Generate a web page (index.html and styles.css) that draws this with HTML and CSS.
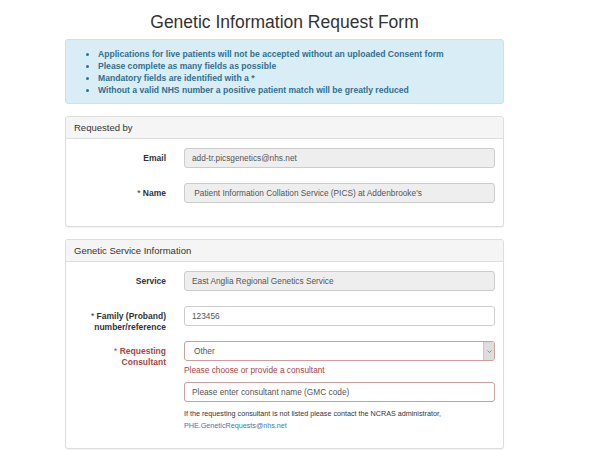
FILE: index.html
```html
<!DOCTYPE html>
<html lang="en">
<head>
<meta charset="utf-8">
<title>Genetic Information Request Form</title>
<link rel="stylesheet" href="styles.css">
</head>
<body>
<div class="container">
  <h1 class="title">Genetic Information Request Form</h1>

  <div class="alert">
    <ul>
      <li>Applications for live patients will not be accepted without an uploaded Consent form</li>
      <li>Please complete as many fields as possible</li>
      <li>Mandatory fields are identified with a *</li>
      <li>Without a valid NHS number a positive patient match will be greatly reduced</li>
    </ul>
  </div>

  <div class="panel">
    <div class="panel-heading">Requested by</div>
    <div class="panel-body">
      <div class="form-group">
        <label class="control-label">Email</label>
        <input class="form-control" type="text" readonly value="add-tr.picsgenetics@nhs.net">
      </div>
      <div class="form-group">
        <label class="control-label"><span class="req">*</span> Name</label>
        <input class="form-control" type="text" readonly value=" Patient Information Collation Service (PICS) at Addenbrooke's">
      </div>
    </div>
  </div>

  <div class="panel">
    <div class="panel-heading">Genetic Service Information</div>
    <div class="panel-body">
      <div class="form-group">
        <label class="control-label">Service</label>
        <input class="form-control" type="text" readonly value="East Anglia Regional Genetics Service">
      </div>
      <div class="form-group">
        <label class="control-label"><span class="req">*</span> Family (Proband) number/reference</label>
        <input class="form-control editable" type="text" value="123456">
      </div>
      <div class="form-group has-error last">
        <label class="control-label"><span class="req">*</span> Requesting Consultant</label>
        <div class="field">
          <div class="select">
            <span class="select-value">Other</span>
            <span class="select-arrow">
              <svg width="5" height="3" viewBox="0 0 5 3"><path d="M0.5 0.5 L2.5 2.5 L4.5 0.5" fill="none" stroke="#777" stroke-width="0.8"/></svg>
            </span>
          </div>
          <div class="error-text">Please choose or provide a consultant</div>
          <input class="form-control editable error-input" type="text" value="Please enter consultant name (GMC code)">
          <p class="help">If the requesting consultant is not listed please contact the NCRAS administrator,<br><a href="#">PHE.GeneticRequests@nhs.net</a></p>
        </div>
      </div>
    </div>
  </div>
</div>
</body>
</html>
```

FILE: styles.css
```css
html, body {
  margin: 0;
  padding: 0;
  background: #fff;
}

body {
  font-family: "Liberation Sans", Arial, sans-serif;
  color: #333;
}

.container {
  width: 439px;
  margin-left: 65px;
}

.title {
  margin: 12px 0 7px;
  font-size: 17.5px;
  line-height: 20px;
  font-weight: normal;
  text-align: center;
  color: #333;
}

.alert {
  box-sizing: border-box;
  height: 65px;
  background: #d9edf7;
  border: 1px solid #bce8f1;
  border-radius: 3px;
  color: #31708f;
  padding: 8px 0 7px;
  margin-bottom: 12px;
}

.alert ul {
  margin: 0;
  padding-left: 32px;
  font-size: 8.6px;
  line-height: 12px;
  font-weight: bold;
}

.panel {
  border: 1px solid #ddd;
  border-radius: 3px;
  background: #fff;
  box-shadow: 0 1px 1px rgba(0, 0, 0, 0.05);
  margin-bottom: 12px;
}

.panel-heading {
  height: 21px;
  line-height: 21px;
  padding: 0 8px;
  background: #f5f5f5;
  border-bottom: 1px solid #ddd;
  border-radius: 3px 3px 0 0;
  font-size: 9.5px;
  color: #333;
}

.panel-body {
  padding: 9px 8px 8px 0;
}

.form-group {
  display: grid;
  grid-template-columns: 100px 1fr;
  column-gap: 18px;
  margin-bottom: 15px;
}

.form-group.last {
  margin-bottom: 8px;
}

.control-label {
  box-sizing: border-box;
  height: 20px;
  padding: 4.5px 0 0 15px;
  text-align: right;
  font-weight: bold;
  font-size: 8.5px;
  line-height: 11px;
  color: #333;
}

.req {
  font-weight: normal;
}

.form-control {
  box-sizing: border-box;
  display: block;
  width: 100%;
  height: 20px;
  margin: 0;
  padding: 0 7px;
  border: 1px solid #ccc;
  border-radius: 3px;
  background: #eee;
  font: 8.3px "Liberation Sans", Arial, sans-serif;
  color: #555;
  outline: none;
}

.form-control.editable {
  background: #fff;
}

.has-error .control-label {
  color: #a94442;
}

.field {
  display: flex;
  flex-direction: column;
}

.select {
  box-sizing: border-box;
  display: flex;
  align-items: stretch;
  height: 20px;
  border: 1px solid #c9a0a0;
  border-radius: 3px;
  background: #fff;
  overflow: hidden;
}

.select-value {
  flex: 1;
  padding-left: 9px;
  font-size: 8.3px;
  line-height: 18px;
  color: #555;
}

.select-arrow {
  width: 10px;
  display: flex;
  align-items: center;
  justify-content: center;
  background: #ddd;
  border-left: 1px solid #c8c8c8;
}

.error-text {
  margin-top: 3px;
  font-size: 8.3px;
  line-height: 12px;
  color: #a94442;
}

.error-input {
  margin-top: 6px;
  border-color: #c9a0a0;
}

.help {
  margin: 6px 0 0;
  font-size: 7.2px;
  line-height: 12px;
  color: #333;
}

.help a {
  color: #337ab7;
  text-decoration: none;
}
```
